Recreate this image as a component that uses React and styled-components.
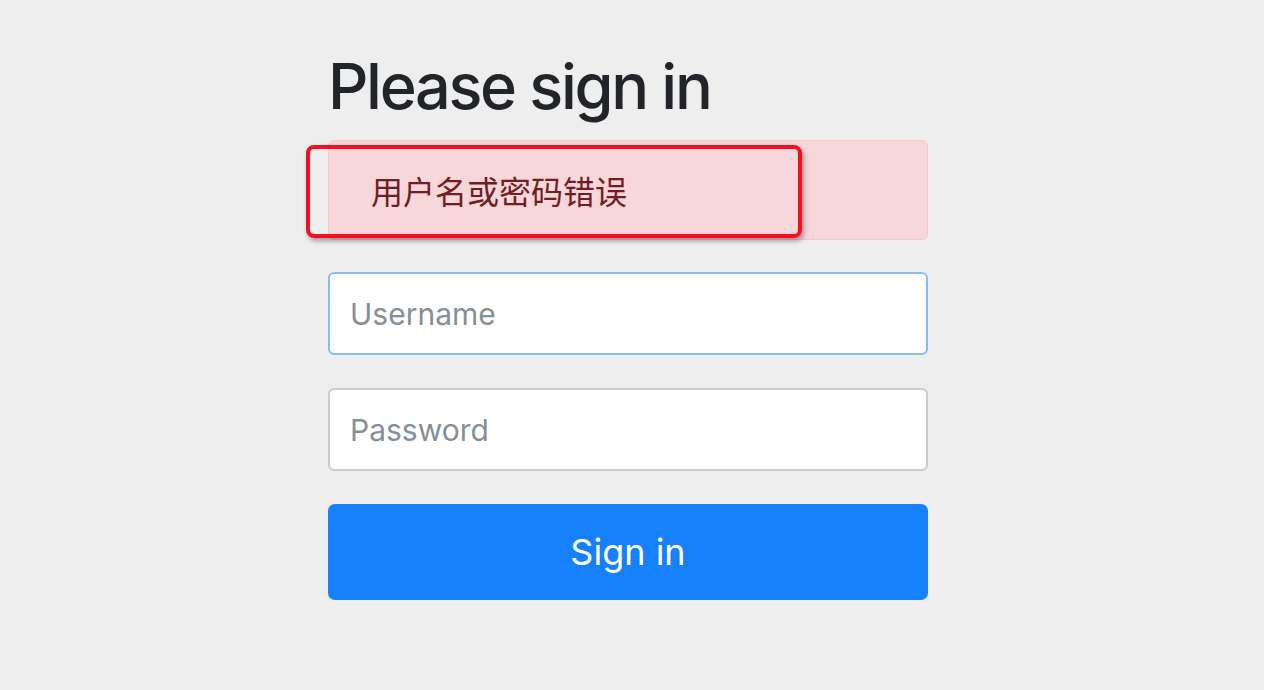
import React from 'react';
import styled, { createGlobalStyle } from 'styled-components';

const GlobalStyle = createGlobalStyle`
    html, body {
        margin: 0;
        padding: 0;
        background: #eeeeee;
        font-family: Inter, "Noto Sans", "Noto Sans CJK SC", sans-serif;
    }
`;

const Page = styled.div`
    display: flex;
    justify-content: center;
    padding: 52px 8px 0 0;
    min-height: 690px;
    box-sizing: border-box;
`;

const SignInForm = styled.form`
    width: 600px;
    display: flex;
    flex-direction: column;
`;

const Heading = styled.h2`
    margin: 0 0 20px 0;
    font-size: 63px;
    font-weight: 550;
    line-height: 68px;
    letter-spacing: -2.3px;
    color: #212529;
`;

const AlertWrap = styled.div`
    position: relative;
    margin-bottom: 32px;
`;

const Alert = styled.div`
    height: 100px;
    box-sizing: border-box;
    display: flex;
    align-items: center;
    padding: 0 42px;
    background: #f8d7da;
    border: 1px solid #f5c6cb;
    border-radius: 6px;
    color: #721c24;
    font-family: "Noto Sans CJK SC", sans-serif;
    font-size: 32px;
`;

const Highlight = styled.div`
    position: absolute;
    left: -22px;
    top: 5px;
    width: 496px;
    height: 93px;
    box-sizing: border-box;
    border: 4px solid #f2101e;
    border-radius: 8px;
    box-shadow: 2px 3px 5px rgba(0, 0, 0, 0.35);
    pointer-events: none;
`;

const Field = styled.input`
    height: 83px;
    box-sizing: border-box;
    margin: 0 0 33px 0;
    padding: 0 20px;
    background: #fff;
    border: 2px solid ${(p) => (p.$focused ? '#86bdf9' : '#cccccc')};
    border-radius: 6px;
    font-family: Inter, sans-serif;
    font-size: 30px;
    color: #495057;
    outline: none;

    &::placeholder {
        color: #868e96;
    }
`;

const SubmitButton = styled.button`
    height: 96px;
    border: none;
    border-radius: 7px;
    background: #1780fb;
    color: #fff;
    font-family: Inter, sans-serif;
    font-size: 36px;
    font-weight: 400;
    cursor: pointer;
`;

const App = () => {
    return (
        <>
            <GlobalStyle />
            <Page>
                <SignInForm onSubmit={(e) => e.preventDefault()}>
                    <Heading>Please sign in</Heading>
                    <AlertWrap>
                        <Alert>用户名或密码错误</Alert>
                        <Highlight />
                    </AlertWrap>
                    <Field type="text" placeholder="Username" $focused />
                    <Field type="password" placeholder="Password" />
                    <SubmitButton type="submit">Sign in</SubmitButton>
                </SignInForm>
            </Page>
        </>
    );
};

export default App;
